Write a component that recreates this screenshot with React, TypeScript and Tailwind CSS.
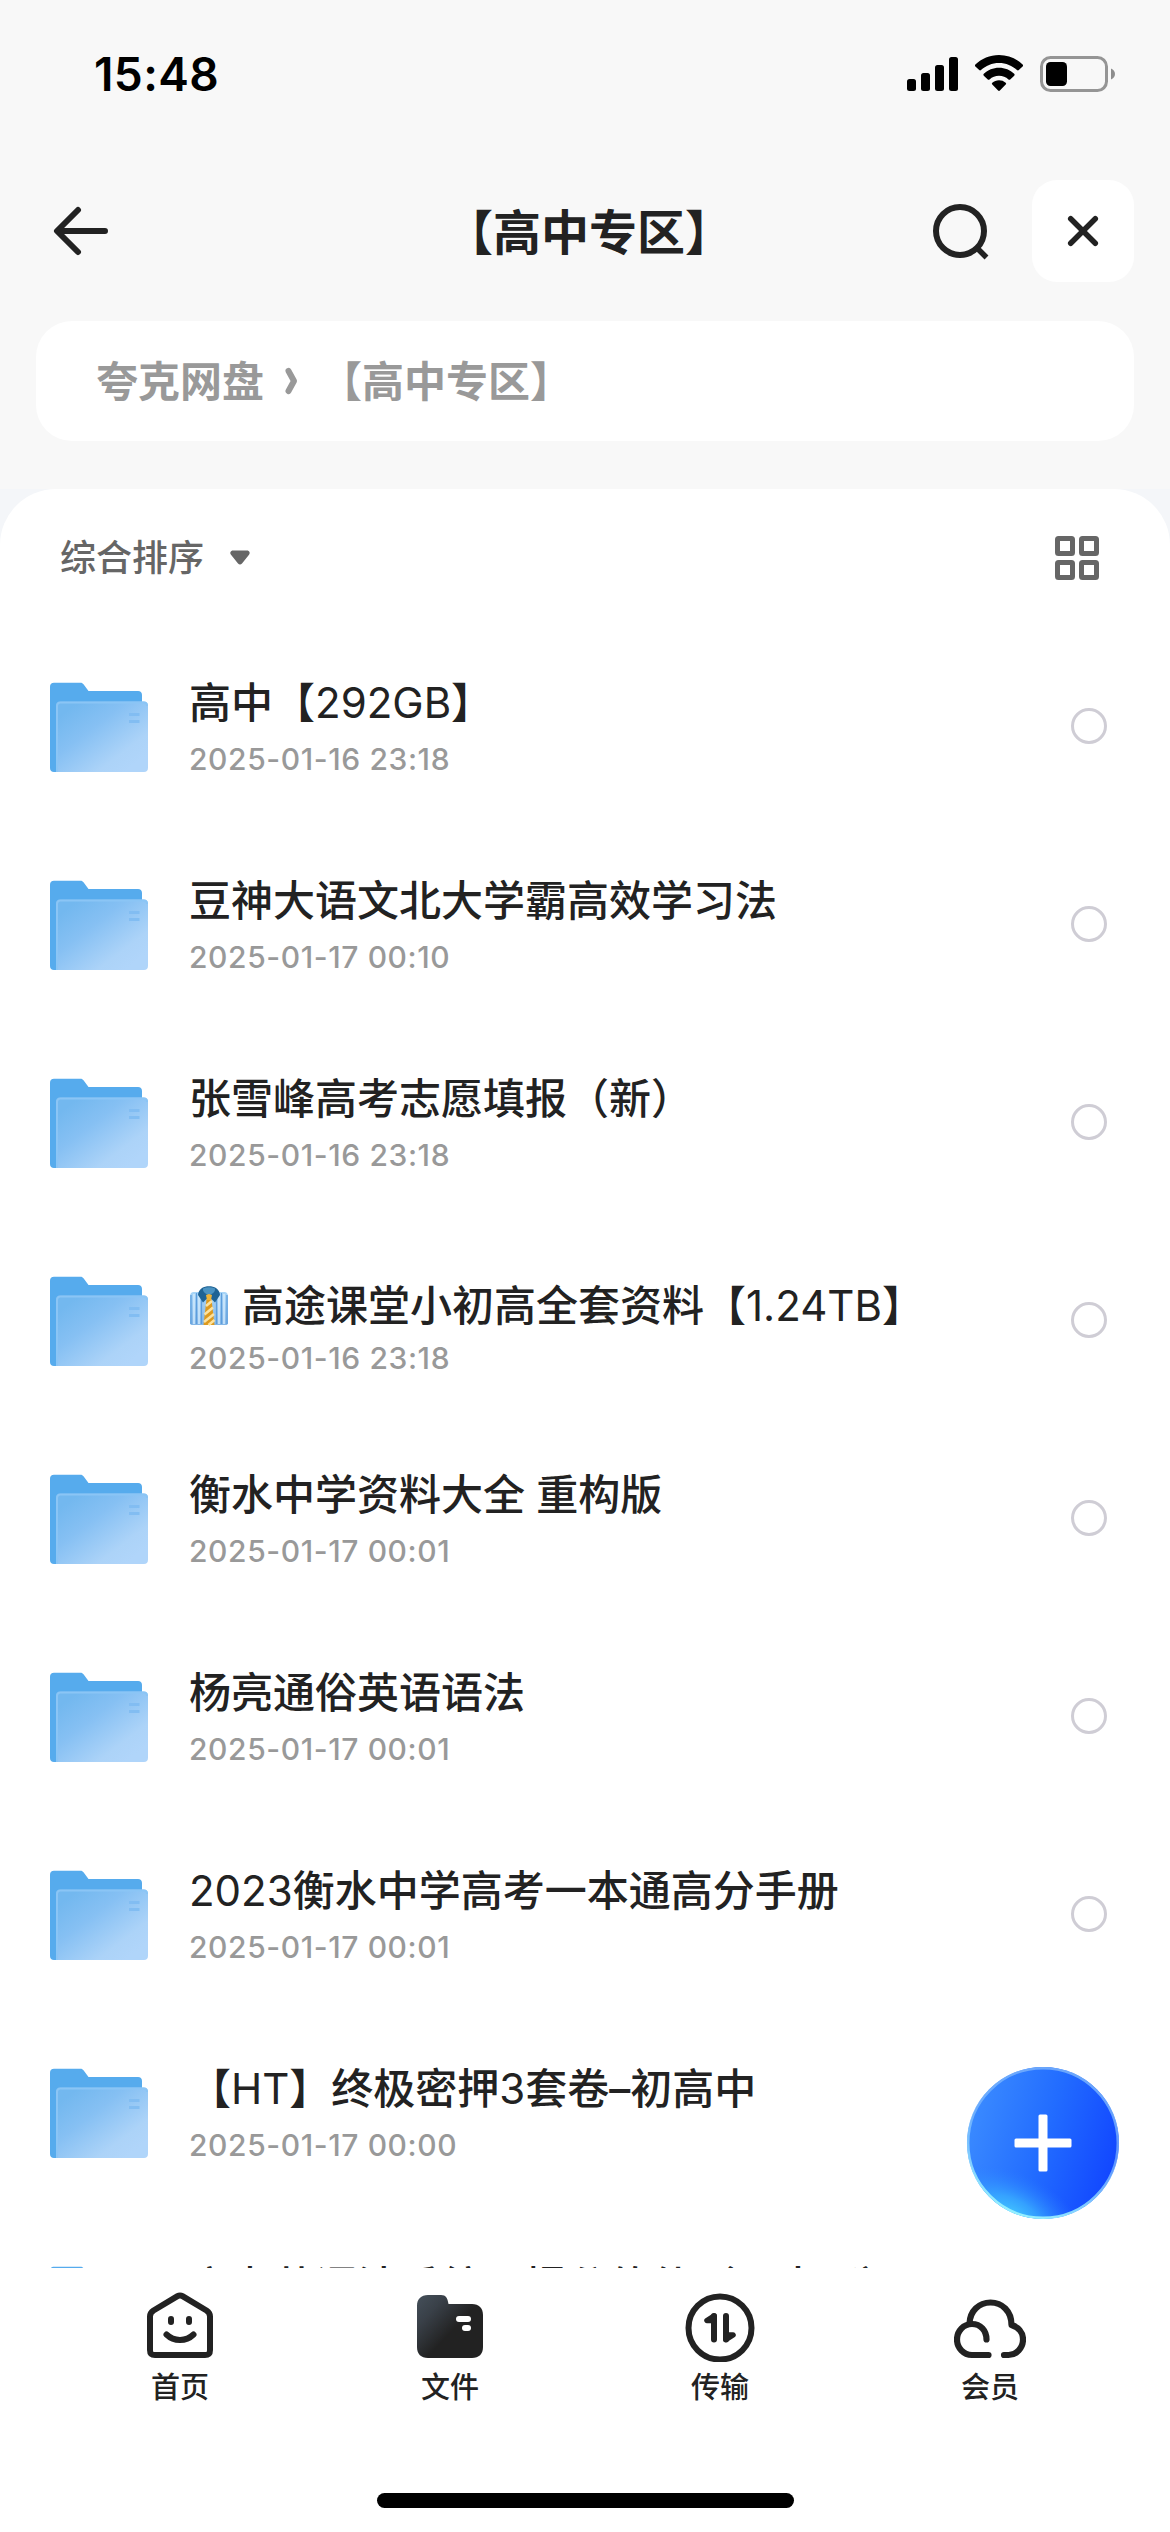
import { useState } from "react";

interface FileItem {
  name: string;
  date: string;
  shirt?: boolean;
}

const files: FileItem[] = [
  { name: "高中【292GB】", date: "2025-01-16 23:18" },
  { name: "豆神大语文北大学霸高效学习法", date: "2025-01-17 00:10" },
  { name: "张雪峰高考志愿填报（新）", date: "2025-01-16 23:18" },
  {
    name: "高途课堂小初高全套资料【1.24TB】",
    date: "2025-01-16 23:18",
    shirt: true,
  },
  { name: "衡水中学资料大全 重构版", date: "2025-01-17 00:01" },
  { name: "杨亮通俗英语语法", date: "2025-01-17 00:01" },
  { name: "2023衡水中学高考一本通高分手册", date: "2025-01-17 00:01" },
  { name: "【HT】终极密押3套卷–初高中", date: "2025-01-17 00:00" },
  { name: "高考英语法系统一提分软件（一本通）", date: "2025-01-17 00:00" },
];

function StatusBar() {
  return (
    <div className="flex h-[150px] items-start justify-between pt-[44px] pr-[54px] pl-[94px]">
      <span className="text-[46px] leading-[60px] font-semibold tracking-[0.4px] text-black">
        15:48
      </span>
      <div className="flex pt-[10px]">
        <svg width="52" height="38" viewBox="0 0 52 38" className="mr-[16px]">
          <rect x="0" y="25" width="9" height="12" rx="2.5" />
          <rect x="14" y="19" width="9" height="18" rx="2.5" />
          <rect x="28" y="11" width="9" height="26" rx="2.5" />
          <rect x="42" y="3" width="9" height="34" rx="2.5" />
        </svg>
        <svg width="48" height="38" viewBox="0 0 48 38" className="mr-[17px]">
          <path d="M24 1C14.800 1 6.500 4.600.400 10.500a1.300 1.300 0 0 0 0 1.900L4.200 16c.500.500 1.300.500 1.800 0C10.700 11.600 17 8.900 24 8.900s13.300 2.700 18 7.100c.500.500 1.300.500 1.800 0l3.800-3.600a1.300 1.300 0 0 0 0-1.900C41.500 4.600 33.200 1 24 1Z" />
          <path d="M24 13.800c-5.900 0-11.200 2.300-15.200 6a1.300 1.300 0 0 0 0 1.900l4 3.800c.500.400 1.200.400 1.700 0a14 14 0 0 1 19 0c.500.400 1.200.400 1.700 0l4-3.800a1.300 1.300 0 0 0 0-1.900c-4-3.700-9.300-6-15.200-6Z" />
          <path d="M24 26.300c-2.600 0-4.900.900-6.700 2.400a1.200 1.200 0 0 0 0 1.800l5.800 6a1.300 1.300 0 0 0 1.800 0l5.800-6a1.200 1.200 0 0 0 0-1.800 10.600 10.600 0 0 0-6.700-2.400Z" />
        </svg>
        <svg width="76" height="38" viewBox="0 0 76 38">
          <rect
            x="1.500"
            y="3.500"
            width="65"
            height="33"
            rx="9"
            fill="none"
            stroke="#959595"
            strokeWidth="3"
          />
          <rect x="6" y="8" width="21" height="24" rx="4.500" />
          <path d="M71 14.500c2.500 1 4 3 4 5.500s-1.500 4.500-4 5.500Z" fill="#8d8d8d" />
        </svg>
      </div>
    </div>
  );
}

function Header() {
  return (
    <header className="grid h-[162px] grid-cols-[300px_1fr_300px] items-center px-9">
      <svg
        width="90"
        height="60"
        viewBox="0 0 90 60"
        fill="none"
        stroke="#222"
        strokeWidth="6"
        strokeLinecap="round"
        strokeLinejoin="round"
      >
        <path d="M42 9 21 30l21 21M22 30h47" />
      </svg>
      <h1 className="pt-[3px] pl-2 text-center text-[48px] leading-[60px] font-bold">
        【高中专区】
      </h1>
      <div className="flex items-center justify-end">
        <svg
          width="60"
          height="60"
          viewBox="0 0 60 60"
          fill="none"
          stroke="#222"
          strokeWidth="6"
          className="mr-[41px]"
        >
          <circle cx="29" cy="30" r="24" />
          <path d="m46.500 47.500 9 9" strokeWidth="5.500" />
        </svg>
        <button className="flex h-[102px] w-[102px] items-center justify-center rounded-[25px] bg-white">
          <svg
            width="36"
            height="36"
            viewBox="0 0 36 36"
            stroke="#222"
            strokeWidth="5.500"
            strokeLinecap="round"
          >
            <path d="m5.700 5.700 24.600 24.600M30.300 5.700 5.700 30.300" />
          </svg>
        </button>
      </div>
    </header>
  );
}

function Breadcrumb() {
  return (
    <nav className="mx-9 mt-[9px] flex h-[120px] items-center rounded-[36px] bg-white pl-[60px] text-[42px] font-bold text-[#999]">
      <span>夸克网盘</span>
      <svg
        width="18"
        height="30"
        viewBox="0 0 18 30"
        fill="none"
        stroke="#999"
        strokeWidth="6"
        strokeLinecap="round"
        strokeLinejoin="round"
        className="mr-[19px] ml-[19px]"
      >
        <path d="m5.500 5 5.500 10-5.500 10" />
      </svg>
      <span>【高中专区】</span>
    </nav>
  );
}

function SortBar() {
  return (
    <div className="flex h-[138px] items-center justify-between pr-[69px] pl-[60px]">
      <button className="flex items-center text-[36px] leading-[48px] font-medium text-[#666]">
        综合排序
        <svg width="22" height="16" viewBox="0 0 22 16" className="ml-[25px]">
          <path
            d="M4 .5h14c2.500 0 3.500 2.500 2 4.300l-7 8.700c-1.200 1.300-2.800 1.300-4 0L2 4.800C.500 3 1.500.5 4 .5Z"
            fill="#666"
          />
        </svg>
      </button>
      <svg
        width="48"
        height="48"
        viewBox="0 0 48 48"
        fill="none"
        stroke="#666"
        strokeWidth="5"
      >
        <rect x="4.500" y="4.500" width="15" height="15" rx="1" />
        <rect x="28.500" y="4.500" width="15" height="15" rx="1" />
        <rect x="4.500" y="28.500" width="15" height="15" rx="1" />
        <rect x="28.500" y="28.500" width="15" height="15" rx="1" />
      </svg>
    </div>
  );
}

function FolderIcon() {
  return (
    <svg width="98" height="92" viewBox="0 0 98 92" className="shrink-0">
      <defs>
        <linearGradient id="folderFront" x1="0.100" y1="0.150" x2="0.850" y2="0.900">
          <stop offset="0" stopColor="#73b8ef" />
          <stop offset="0.350" stopColor="#86c0f3" />
          <stop offset="0.800" stopColor="#acd3f8" />
          <stop offset="1" stopColor="#b0d5fa" />
        </linearGradient>
      </defs>
      <path
        d="M4 2.700h26.500c1.400 0 2.300.500 3 1.600L38.500 11H88c2.500 0 4 1.500 4 4v66L6 92H4c-2.500 0-4-1.500-4-4V6.700c0-2.500 1.500-4 4-4Z"
        fill="#56abed"
      />
      <path
        d="M10 21.500h84c2.500 0 4 1.500 4 4V88c0 2.500-1.500 4-4 4H6V25.500c0-2.500 1.500-4 4-4Z"
        fill="url(#folderFront)"
      />
      <path
        d="M7 92V26c0-2.200 1.300-3.500 3.500-3.500h83c2.200 0 3.500 1.300 3.500 3.500"
        fill="none"
        stroke="#8bc5f5"
        strokeWidth="2"
      />
      <path d="M79 34.500h10.500M79 41.500h10.500" stroke="#82bdf2" strokeWidth="3" />
    </svg>
  );
}

function ShirtIcon() {
  return (
    <svg width="40" height="42" viewBox="0 0 40 42" className="mr-[13px]">
      <defs>
        <linearGradient id="shirtBody" x1="0" y1="0" x2="0" y2="1">
          <stop offset="0" stopColor="#a9d6f8" />
          <stop offset="1" stopColor="#84b6e6" />
        </linearGradient>
      </defs>
      <path
        d="M4 7h32c2 .5 3 2 3 4.500V38c0 1.500-1 2-2.500 2h-33C2 40 1 39.500 1 38V11.500C1 9 2 7.500 4 7Z"
        fill="url(#shirtBody)"
      />
      <path
        d="M2 10v29M7.500 8v31M12.500 14v25M27.500 14v25M32.500 8v31M38 10v29"
        stroke="#5c9ddc"
        strokeWidth="1.200"
      />
      <path
        d="M5 9v30M10 9v30M30 9v30M35 9v30"
        stroke="#d4ebfd"
        strokeWidth="1.500"
      />
      <path d="m18 10-3.500 30h11L22 10Z" fill="#dd9a1e" />
      <path
        d="m17 21 6-5M15.500 29.500l8.500-7M15 37l10-8M19.500 40l6-5"
        stroke="#fbe2a0"
        strokeWidth="2.500"
      />
      <path
        d="M13 3c3.500-2.500 10.500-2.500 14 0 2.500 2 4 4.500 4 7l-5 7.500-6-6-6 6L9 10c0-2.500 1.500-5 4-7Z"
        fill="#1f6394"
      />
      <path
        d="M14 3.500c4-1.800 8-1.800 12 0 .5 3-2 5.500-6 6.500-4-1-6.500-3.500-6-6.500Z"
        fill="#4b93c2"
      />
      <path d="m17 10 3-1 3 1-1 5h-4Z" fill="#eeb43b" />
    </svg>
  );
}

// Latin runs are set lighter than the Chinese around them
function FileName({ name }: { name: string }) {
  return (
    <span className="whitespace-pre">
      {name.split(/([A-Za-z0-9.]+)/).map((part, i) =>
        i % 2 ? (
          <span key={i} className="font-normal">
            {part}
          </span>
        ) : (
          part
        ),
      )}
    </span>
  );
}

function FileRow({ file }: { file: FileItem }) {
  const [checked, setChecked] = useState(false);

  return (
    <li className="flex h-[198px] shrink-0 items-center pr-[63px] pl-[50px]">
      <FolderIcon />
      <div className="ml-[41px] flex flex-1 flex-col whitespace-nowrap">
        <div
          className={
            file.shirt
              ? "flex h-[74px] items-end text-[42px] leading-[60px] font-medium"
              : "flex h-[61px] items-end text-[42px] leading-[60px] font-medium"
          }
        >
          {file.shirt && (
            <span className="flex h-[60px] items-center">
              <ShirtIcon />
            </span>
          )}
          <FileName name={file.name} />
        </div>
        <div
          className={
            file.shirt
              ? "mt-px text-[30px] leading-[42px] font-medium tracking-[0.6px] text-[#999]"
              : "mt-[5px] text-[30px] leading-[42px] font-medium tracking-[0.6px] text-[#999]"
          }
        >
          {file.date}
        </div>
      </div>
      <button
        onClick={() => setChecked(!checked)}
        className={
          checked
            ? "h-9 w-9 rounded-full border-[3px] border-blue-500 bg-blue-500"
            : "h-9 w-9 rounded-full border-[3px] border-[#cfcdd5]"
        }
      />
    </li>
  );
}

function AddButton() {
  return (
    <button className="absolute right-[50px] bottom-[312px]">
      <svg width="154" height="154" viewBox="0 0 154 154">
        <defs>
          <linearGradient id="fab" x1="0" y1="0.350" x2="1" y2="0.650">
            <stop offset="0" stopColor="#3b8bff" />
            <stop offset="0.500" stopColor="#226cff" />
            <stop offset="1" stopColor="#1145ff" />
          </linearGradient>
          <radialGradient
            id="fabGlow"
            cx="0"
            cy="0"
            r="1"
            gradientUnits="userSpaceOnUse"
            gradientTransform="translate(44 150) rotate(25) scale(80 44)"
          >
            <stop offset="0" stopColor="#45ccff" />
            <stop offset="0.400" stopColor="#3ab2ff" stopOpacity="0.750" />
            <stop offset="1" stopColor="#2b7cff" stopOpacity="0" />
          </radialGradient>
          <linearGradient id="fabRim" x1="0.700" y1="0" x2="0.350" y2="1">
            <stop offset="0" stopColor="#6aa5fb" />
            <stop offset="0.450" stopColor="#8cc4fd" stopOpacity="0.600" />
            <stop offset="1" stopColor="#96f2ff" />
          </linearGradient>
        </defs>
        <circle cx="77" cy="77" r="76" fill="url(#fab)" />
        <circle cx="77" cy="77" r="76" fill="url(#fabGlow)" />
        <circle
          cx="77"
          cy="77"
          r="74.800"
          fill="none"
          stroke="url(#fabRim)"
          strokeWidth="2.500"
        />
        <rect x="48.500" y="72.500" width="57" height="9" rx="1.500" fill="#fff" />
        <rect x="72.500" y="48.500" width="9" height="57" rx="1.500" fill="#fff" />
      </svg>
    </button>
  );
}

function HomeIcon() {
  return (
    <svg
      width="72"
      height="72"
      viewBox="0 0 72 72"
      fill="none"
      stroke="#222"
      strokeWidth="6"
      strokeLinecap="round"
    >
      <path
        d="M33.500 6.200 9.500 20.500C7.200 22 6 24 6 26.500V60c0 3.500 1.500 5 5 5h50c3.500 0 5-1.500 5-5V26.500c0-2.500-1.200-4.500-3.500-6L38.500 6.200c-1.700-1-3.300-1-5 0Z"
        strokeLinejoin="round"
      />
      <path d="M27 29v3M45 29v3" />
      <path d="M22.500 44.500c7.500 7.300 19.500 7.300 27 0" />
    </svg>
  );
}

function FilesIcon() {
  return (
    <svg width="72" height="72" viewBox="0 0 72 72">
      <defs>
        <linearGradient id="filesTab" x1="0.050" y1="0.100" x2="0.550" y2="0.550">
          <stop offset="0" stopColor="#414b55" />
          <stop offset="0.350" stopColor="#394048" />
          <stop offset="1" stopColor="#222" />
        </linearGradient>
      </defs>
      <path
        d="M14 5h13c5 0 6.500 3 7.500 9H58c7 0 11 4 11 11v32c0 7-4 11-11 11H14C7 68 3 64 3 57V16C3 9 7 5 14 5Z"
        fill="url(#filesTab)"
      />
      <rect x="42" y="26" width="15" height="6" rx="3" fill="#fff" />
      <rect x="48" y="35" width="9" height="6" rx="3" fill="#fff" />
    </svg>
  );
}

function TransferIcon() {
  return (
    <svg
      width="72"
      height="72"
      viewBox="0 0 72 72"
      fill="none"
      stroke="#222"
      strokeWidth="6"
      strokeLinecap="round"
      strokeLinejoin="round"
    >
      <circle cx="36" cy="38" r="31.500" />
      <path d="M30 26v23.500M42 26v23.500" />
      <path d="m30 26-7 4.500H30ZM42 49.500l7-4.500H42Z" strokeWidth="5.500" />
    </svg>
  );
}

function MemberIcon() {
  return (
    <svg
      width="72"
      height="72"
      viewBox="0 0 72 72"
      fill="none"
      stroke="#222"
      strokeWidth="6.200"
      strokeLinecap="round"
      strokeLinejoin="round"
    >
      <path d="M34.500 65H18C9.500 65 3 58 3 49.500S9.500 34 18 34s14.500 6.500 14.500 15.500" />
      <path d="M15.500 33.500C16 21 25 12.500 36.500 12.500S57.500 21 57.500 35C64 37 69 42 69 49.500 69 58 62.500 65 54.500 65H50" />
    </svg>
  );
}

const tabs = [
  { label: "首页", icon: HomeIcon },
  { label: "文件", icon: FilesIcon },
  { label: "传输", icon: TransferIcon },
  { label: "会员", icon: MemberIcon },
];

function TabBar() {
  return (
    <footer className="flex h-[264px] shrink-0 flex-col items-center justify-between bg-white pt-[22px] pb-6">
      <div className="flex w-full px-[45px]">
        {tabs.map(({ label, icon: Icon }) => (
          <button key={label} className="flex flex-1 flex-col items-center">
            <Icon />
            <span className="mt-[6px] text-[29px] leading-[40px] font-medium">
              {label}
            </span>
          </button>
        ))}
      </div>
      <div className="h-[15px] w-[417px] rounded-full bg-black" />
    </footer>
  );
}

export default function App() {
  return (
    <div className="relative flex h-[2532px] w-[1170px] flex-col overflow-hidden bg-[#f8f8f8] font-['Inter','Noto_Sans_CJK_SC',sans-serif] text-[#222]">
      <StatusBar />
      <Header />
      <Breadcrumb />
      <div className="mt-12 flex min-h-0 flex-1 flex-col bg-[#f4f6f9]">
        <main className="flex min-h-0 flex-1 flex-col rounded-t-[56px] bg-white">
          <SortBar />
          <ul className="flex min-h-0 flex-1 flex-col overflow-hidden">
            {files.map((file) => (
              <FileRow key={file.name} file={file} />
            ))}
          </ul>
        </main>
      </div>
      <TabBar />
      <AddButton />
    </div>
  );
}
